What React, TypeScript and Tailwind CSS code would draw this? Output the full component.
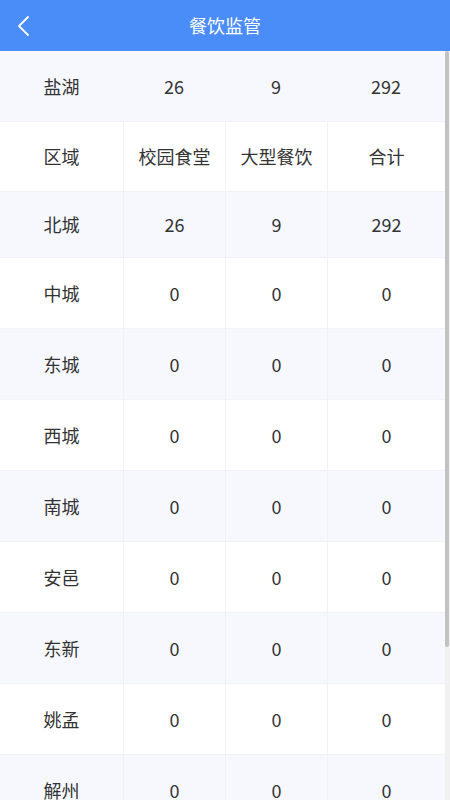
const rows: [string, string, string, string][] = [
  ["北城", "26", "9", "292"],
  ["中城", "0", "0", "0"],
  ["东城", "0", "0", "0"],
  ["西城", "0", "0", "0"],
  ["南城", "0", "0", "0"],
  ["安邑", "0", "0", "0"],
  ["东新", "0", "0", "0"],
  ["姚孟", "0", "0", "0"],
  ["解州", "0", "0", "0"],
];

function Row({
  cells,
  striped,
  height,
  borders = true,
}: {
  cells: string[];
  striped: boolean;
  height: string;
  borders?: boolean;
}) {
  return (
    <div
      className={`flex shrink-0 border-b border-[#f1f3f6] ${height} ${
        striped ? "bg-[#f6f8fe]" : "bg-white"
      }`}
    >
      {cells.map((c, i) => (
        <div
          key={i}
          className={`flex items-center justify-center ${
            ["w-[123px]", "w-[102px]", "w-[102px]", "w-[118px]"][i]
          } ${borders && i > 0 ? "border-l border-[#f0f2f5]" : ""}`}
        >
          {c}
        </div>
      ))}
    </div>
  );
}

export default function App() {
  return (
    <div
      className="flex h-[800px] w-[450px] flex-col overflow-hidden bg-white text-[18px] text-[#333]"
      style={{ fontFamily: '"Noto Sans CJK SC", "Noto Sans", sans-serif' }}
    >
      <div className="relative flex h-[51px] shrink-0 items-center justify-center bg-[#4a8cf8] text-white">
        <svg
          className="absolute left-[15px] top-[15px]"
          width="18"
          height="22"
          viewBox="0 0 18 22"
          fill="none"
        >
          <path d="M13 2 L4 11 L13 20" stroke="white" strokeWidth="1.8" strokeLinecap="round" strokeLinejoin="round" />
        </svg>
        <span className="text-[18px]">餐饮监管</span>
      </div>

      <div className="flex min-h-0 flex-1">
        <div className="flex w-[445px] flex-col overflow-hidden">
          <Row cells={["盐湖", "26", "9", "292"]} striped height="h-[71px]" borders={false} />
          <Row cells={["区域", "校园食堂", "大型餐饮", "合计"]} striped={false} height="h-[70px]" />
          {rows.map((r, i) => (
            <Row
              key={r[0]}
              cells={r}
              striped={i % 2 === 0}
              height={i === 0 ? "h-[66px]" : "h-[71px]"}
            />
          ))}
        </div>
        <div className="flex w-[5px] flex-col bg-[#f1f1f1]">
          <div className="h-[596px] w-[4px] rounded-sm bg-[#c2c2c2]" />
        </div>
      </div>
    </div>
  );
}
